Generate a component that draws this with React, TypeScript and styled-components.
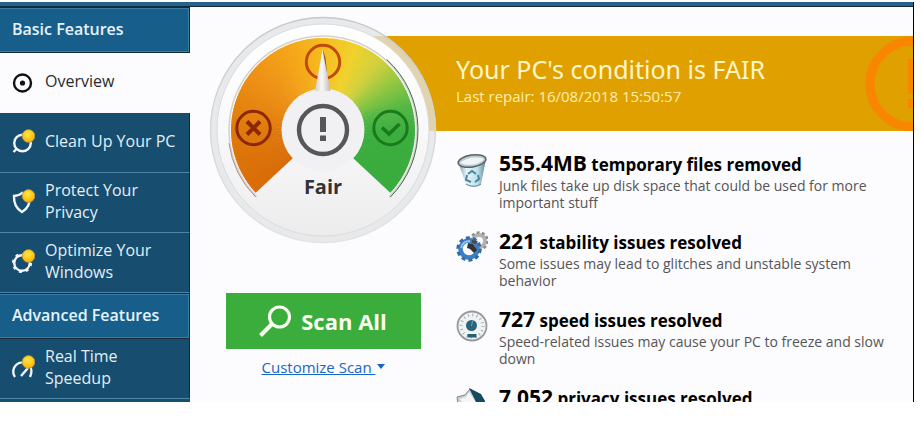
import React from "react";
import styled, { createGlobalStyle, css } from "styled-components";

const GlobalStyle = createGlobalStyle`
  * { box-sizing: border-box; }
  body {
    margin: 0;
    background: #fff;
    font-family: "Open Sans", "Noto Sans", sans-serif;
    color: #000;
  }
  h1, h2, h3, p, ul { margin: 0; padding: 0; }
  ul { list-style: none; }
  svg { display: block; flex: none; }
`;

const Page = styled.div`
  height: 100vh;
  padding: 2px 7px 24px 0;
`;

const AppWindow = styled.div`
  height: 100%;
  display: grid;
  grid-template: 5px minmax(0, 1fr) / 190px minmax(0, 1fr);
  overflow: hidden;
  border-right: 1px solid #000;
  background: #fcfbfd;
`;

const TitleEdge = styled.div`
  grid-column: 1 / -1;
  background: #24638f;
  border-bottom: 1px solid #14293a;
`;

const Sidebar = styled.nav`
  overflow: hidden;
  background: #174d6e;
`;

const SectionTitle = styled.h2`
  height: 46px;
  padding: 0 12px 2px;
  display: flex;
  align-items: center;
  border: 1px solid #14293a;
  border-left: 0;
  background: #175f8a;
  box-shadow: inset -1px 1px #3d7da3, inset 0 -1px #3d7da3;
  color: #e6f3fa;
  font-size: 16px;
  font-weight: 600;
  line-height: 22px;
`;

const NavLink = styled.a<{ $active?: boolean }>`
  height: 60px;
  padding: 0 12px 3px 10px;
  display: flex;
  align-items: center;
  gap: 10px;
  border-right: 1px solid #14293a;
  border-bottom: 1px solid #4c85a8;
  color: #e3eff6;
  font-size: 16px;
  line-height: 22px;
  text-decoration: none;
  ${(p) =>
    p.$active &&
    css`
      border-color: #fcfbfd;
      background: #fcfbfd;
      color: #2a2c30;
    `}
`;

const Main = styled.main`
  display: grid;
  grid-template: auto minmax(0, 1fr) / 266px minmax(0, 1fr);
  overflow: hidden;
`;

const Banner = styled.header`
  grid-area: 1 / 1 / 2 / -1;
  position: relative;
  min-height: 95px;
  margin: 29px 0 0 133px;
  padding: 16px 60px 16px 133px;
  overflow: hidden;
  background: #dfa000;
  color: #fff6c8;
`;

const BannerTitle = styled.h1`
  font-family: "Noto Sans", "Open Sans", sans-serif;
  font-size: 25px;
  font-weight: 400;
  line-height: 34px;
  white-space: nowrap;
`;

const BannerNote = styled.p`
  font-size: 15px;
  line-height: 20px;
  color: #ffeeb0;
`;

const BannerMark = styled.svg`
  position: absolute;
  top: 0;
  right: -48px;
`;

const ScanColumn = styled.section`
  grid-area: 1 / 1 / 3 / 2;
  z-index: 1;
  padding: 9px 0 0 19px;
  width: 247px;
  display: flex;
  flex-direction: column;
  align-items: center;
`;

const Dial = styled.div`
  display: grid;
  justify-items: center;
  > * { grid-area: 1 / 1; }
`;

const DialLabel = styled.strong`
  align-self: end;
  margin-bottom: 43px;
  color: #333;
  font-size: 20px;
  line-height: 28px;
`;

const ScanButton = styled.button`
  width: 195px;
  height: 56px;
  margin-top: 49px;
  padding: 0;
  display: flex;
  align-items: center;
  justify-content: center;
  gap: 10px;
  border: 0;
  background: #3aad3c;
  color: #fbfff0;
  font: 700 22px/28px "Open Sans", "Noto Sans", sans-serif;
`;

const CustomizeLink = styled.a`
  margin-top: 8px;
  display: flex;
  align-items: center;
  gap: 1px;
  color: #1a66c4;
  font-size: 15px;
  line-height: 20px;
  white-space: pre;
  text-decoration: none;
  span { text-decoration: underline; }
`;

const Results = styled.ul`
  grid-area: 2 / 2;
  padding: 20px 16px 0 0;
`;

const Result = styled.li`
  height: 78px;
  display: flex;
  gap: 11px;
  > svg { margin-top: 2px; }
`;

const ResultTitle = styled.h3`
  font-size: 17px;
  font-weight: 700;
  line-height: 24px;
  white-space: nowrap;
`;

const Amount = styled.span`
  font-size: 21px;
`;

const ResultText = styled.p`
  color: #555;
  font-size: 14px;
  line-height: 17px;
`;

const navShapes = {
  clean: <><circle cx="12.500" cy="14" r="8.300" /><path d="M6.500 20l-3 3" /></>,
  shield: <path d="M4 7c4-.2 6-1 8-3 2 2 4 3 8 3 .3 7-2 12.500-8 16C6 19.500 3.700 14 4 7z" />,
  gear: <><circle cx="12" cy="14" r="7.800" /><circle cx="12" cy="14" r="9" strokeWidth="2.200" strokeDasharray="3 4.070" /></>,
  speed: <path d="M5 22c-3-4-2-9 1-12 4-4 10-3 13 0 3 3 3 8 1 12M11 21l7-8" />,
};

function NavIcon({ name }: { name: keyof typeof navShapes }) {
  return (
    <svg width="25" height="25" viewBox="0 0 25 25" aria-hidden="true">
      <defs>
        <radialGradient id={`dot-${name}`} cx=".45" cy=".35" r=".65">
          <stop offset="0" stopColor="#ffe650" />
          <stop offset=".6" stopColor="#ffc913" />
          <stop offset="1" stopColor="#f2ad18" />
        </radialGradient>
      </defs>
      <g fill="none" stroke="#f1f7fa" strokeWidth="2.400">{navShapes[name]}</g>
      <circle cx="18.500" cy="7" r="6.400" fill={`url(#dot-${name})`} stroke="#a98b48" strokeWidth=".8" />
    </svg>
  );
}

function OverviewIcon() {
  return (
    <svg width="25" height="25" viewBox="0 0 25 25" aria-hidden="true">
      <circle cx="12.500" cy="14" r="8.500" fill="none" stroke="#111" strokeWidth="2.400" />
      <circle cx="12.500" cy="14" r="2.600" fill="#111" />
    </svg>
  );
}

const dialStops: [number, number, number, number][] = [
  [-133, 216, 108, 8],
  [-90, 224, 122, 12],
  [-50, 238, 146, 22],
  [-20, 245, 168, 26],
  [0, 246, 188, 32],
  [22, 240, 210, 44],
  [40, 208, 208, 62],
  [55, 150, 200, 66],
  [75, 82, 183, 70],
  [92, 60, 174, 64],
  [133, 58, 171, 61],
];

function dialColor(angle: number) {
  const i = Math.max(1, dialStops.findIndex((s) => s[0] >= angle));
  const a = dialStops[i - 1];
  const b = dialStops[i];
  const t = (angle - a[0]) / (b[0] - a[0]);
  const mix = [1, 2, 3].map((k) => Math.round(a[k] + (b[k] - a[k]) * t));
  return `rgb(${mix.join(",")})`;
}

function point(r: number, angle: number) {
  const rad = (angle * Math.PI) / 180;
  return `${(r * Math.sin(rad)).toFixed(2)} ${(-r * Math.cos(rad)).toFixed(2)}`;
}

function Gauge() {
  const slices = Array.from({ length: 133 }, (_, i) => -133 + i * 2);
  return (
    <svg width="228" height="228" viewBox="-114 -114 228 228" role="img" aria-label="Condition gauge">
      <defs>
        <linearGradient id="face" x2="0" y2="1">
          <stop offset="0" stopColor="#fff" />
          <stop offset=".5" stopColor="#f9f9fb" />
          <stop offset="1" stopColor="#ececed" />
        </linearGradient>
        <linearGradient id="needle">
          <stop offset="0" stopColor="#d0cec9" />
          <stop offset=".45" stopColor="#f8f8f8" />
          <stop offset="1" stopColor="#bdbbb8" />
        </linearGradient>
        <linearGradient id="rim" x2="0" y2="1">
          <stop offset="0" stopColor="#c7c9c9" />
          <stop offset=".5" stopColor="#d5d7d7" />
          <stop offset="1" stopColor="#e2e3e4" />
        </linearGradient>
      </defs>
      <circle r="109.500" fill="none" stroke="#dfe3e5" strokeOpacity=".76" strokeWidth="7" />
      <circle r="112.500" fill="none" stroke="url(#rim)" strokeWidth="1.300" />
      <circle r="106" fill="url(#face)" stroke="#d9dbdc" />
      <path d={`M${point(94, -135)}A94 94 0 1 1 ${point(94, 135)}`} fill="none" stroke="#d5d2cd" strokeWidth="1.500" />
      <path d={`M${point(95, 42)}A95 95 0 0 1 ${point(95, 135)}`} fill="none" stroke="#426a48" strokeWidth="1" />
      <path d={`M${point(95, -135)}A95 95 0 0 1 ${point(95, -98)}`} fill="none" stroke="#b98e80" strokeWidth="1" />
      {slices.map((a) => (
        <path
          key={a}
          d={`M${point(41, a)}L${point(92, a)}A92 92 0 0 1 ${point(92, Math.min(a + 2.6, 133))}L${point(41, Math.min(a + 2.6, 133))}z`}
          fill={dialColor(a + 1)}
        />
      ))}
      <circle r="41.500" fill="#f1f1f3" />
      <g fill="none" strokeWidth="3">
        <g stroke="#8c2703">
          <circle cx="-69.500" cy="-2" r="16.700" />
          <path d="M-76-8.500l13 13m0-13l-13 13" strokeWidth="4" />
        </g>
        <circle cx="0" cy="-68" r="16.700" stroke="#c14a05" />
        <g stroke="#1a7a1c">
          <circle cx="67.500" cy="-2" r="16.700" />
          <path d="M59-2.500l7 6.500 10.500-10" strokeWidth="3.600" />
        </g>
      </g>
      <path d="M0-80L2.500-72 4-58 1-58z" fill="#8d5a20" />
      <path d="M-.5-80L-8-39H7.500z" fill="url(#needle)" />
      <circle r="24" fill="none" stroke="#575757" strokeWidth="4.400" />
      <path d="M-3-13h6V2h-6zM-3 5.500h6V11h-6z" fill="#575757" />
    </svg>
  );
}

function TrashIcon() {
  return (
    <svg width="32" height="36" viewBox="0 0 32 36" aria-hidden="true">
      <defs>
        <linearGradient id="bin"><stop stopColor="#75939f" /><stop offset=".3" stopColor="#e4f5fa" /><stop offset=".7" stopColor="#b9e0eb" /><stop offset="1" stopColor="#64828e" /></linearGradient>
      </defs>
      <path d="M2 9l8 22c3 4 12 4 15 0L30 6z" fill="url(#bin)" />
      <ellipse cx="16" cy="8" rx="14" ry="6" fill="#bcc8cd" stroke="#566369" strokeWidth="1.500" transform="rotate(-9 16 8)" />
      <path d="M4 10c5-5 16-7 24-4-3 5-15 8-24 4z" fill="#edf5f6" />
      <path d="M12 21l4-3 4 3M22 22l1 4-4 3M15 29l-5-2 1-5" fill="none" stroke="#4f8598" strokeWidth="2" />
      <path d="M10 31c5 3 10 3 15 0" fill="none" stroke="#5e7d87" />
    </svg>
  );
}

function GearsIcon() {
  return (
    <svg width="32" height="32" viewBox="0 0 32 32" aria-hidden="true">
      <g fill="none">
        <circle cx="23" cy="10" r="6" stroke="#b5b3b0" strokeWidth="4" />
        <circle cx="23" cy="10" r="8.500" stroke="#918f8d" strokeWidth="2.500" strokeDasharray="3 2.340" />
        <circle cx="13" cy="18" r="8.500" stroke="#3f7fc0" strokeWidth="4.500" />
        <circle cx="13" cy="18" r="11.200" stroke="#2f6cab" strokeWidth="3" strokeDasharray="4 3.037" />
        <path d="M5 17c1-5 4-7 9-7" stroke="#93c0e6" strokeWidth="2" />
        <path d="M12 12l5 1 4 6-3 3-4-4-3-1z" fill="#30343a" />
        <path d="M16 9l6 1-2 3-4-1z" fill="#4a4a4b" />
      </g>
    </svg>
  );
}

function SpeedIcon() {
  return (
    <svg width="32" height="34" viewBox="0 0 32 34" aria-hidden="true">
      <circle cx="16" cy="17" r="14.500" fill="#f1f3f3" stroke="#949ba0" strokeWidth="1.800" />
      <circle cx="16" cy="17" r="11" fill="none" stroke="#a4adb2" strokeWidth="3" strokeDasharray="1 3.319" />
      <circle cx="15.500" cy="16.500" r="5.500" fill="#28637f" />
      <path d="M15.500 17l1-5" stroke="#73a6ba" />
      <path d="M11.500 25h9v3.500h-9z" fill="#246077" />
    </svg>
  );
}

function PrivacyIcon() {
  return (
    <svg width="32" height="34" viewBox="0 0 32 34" aria-hidden="true">
      <path d="M1 10l8-2 5-6 5 3 8 7v12l-13 8L3 24z" fill="#ccd3d6" stroke="#78868c" />
      <path d="M13 1l6 3 6 3 4 7v10l-9-9z" fill="#164b5f" />
      <path d="M4 12l6-2 3-5 6 9-5 13z" fill="#f5f7f7" />
    </svg>
  );
}

const results = [
  { icon: <TrashIcon />, amount: "555.4MB", title: "temporary files removed", text: "Junk files take up disk space that could be used for more important stuff" },
  { icon: <GearsIcon />, amount: "221", title: "stability issues resolved", text: "Some issues may lead to glitches and unstable system behavior" },
  { icon: <SpeedIcon />, amount: "727", title: "speed issues resolved", text: "Speed-related issues may cause your PC to freeze and slow down" },
  { icon: <PrivacyIcon />, amount: "7,052", title: "privacy issues resolved", text: "" },
];

export default function App() {
  return (
    <>
      <GlobalStyle />
      <Page>
        <AppWindow>
          <TitleEdge />
          <Sidebar>
            <SectionTitle>Basic Features</SectionTitle>
            <NavLink href="#overview" $active aria-current="page"><OverviewIcon />Overview</NavLink>
            <NavLink href="#clean"><NavIcon name="clean" />Clean Up Your PC</NavLink>
            <NavLink href="#privacy"><NavIcon name="shield" />Protect Your Privacy</NavLink>
            <NavLink href="#optimize"><NavIcon name="gear" />Optimize Your Windows</NavLink>
            <SectionTitle>Advanced Features</SectionTitle>
            <NavLink href="#speedup"><NavIcon name="speed" />Real Time Speedup</NavLink>
          </Sidebar>
          <Main>
            <Banner>
              <BannerTitle>Your PC's condition is FAIR</BannerTitle>
              <BannerNote>Last repair: 16/08/2018 15:50:57</BannerNote>
              <BannerMark width="96" height="96" viewBox="0 0 96 96" aria-hidden="true">
                <circle cx="48" cy="48" r="43" fill="none" stroke="#f98600" strokeWidth="9" />
                <path d="M43 23h10v35H43zM43 63h10v9H43z" fill="#f98600" />
              </BannerMark>
            </Banner>
            <ScanColumn>
              <Dial>
                <Gauge />
                <DialLabel>Fair</DialLabel>
              </Dial>
              <ScanButton type="button">
                <svg width="32" height="32" viewBox="0 0 32 32" fill="none" stroke="currentColor" aria-hidden="true">
                  <circle cx="20.500" cy="12" r="10" strokeWidth="3.200" />
                  <path d="M13 19L1.500 30.500" strokeWidth="4" />
                </svg>
                Scan All
              </ScanButton>
              <CustomizeLink href="#customize">
                <span>Customize Scan </span>
                <svg width="8" height="6" viewBox="0 0 8 6" aria-hidden="true"><path d="M0 0h8L4 5z" fill="#1763c6" /></svg>
              </CustomizeLink>
            </ScanColumn>
            <Results>
              {results.map((r) => (
                <Result key={r.amount}>
                  {r.icon}
                  <div>
                    <ResultTitle><Amount>{r.amount}</Amount> {r.title}</ResultTitle>
                    <ResultText>{r.text}</ResultText>
                  </div>
                </Result>
              ))}
            </Results>
          </Main>
        </AppWindow>
      </Page>
    </>
  );
}
